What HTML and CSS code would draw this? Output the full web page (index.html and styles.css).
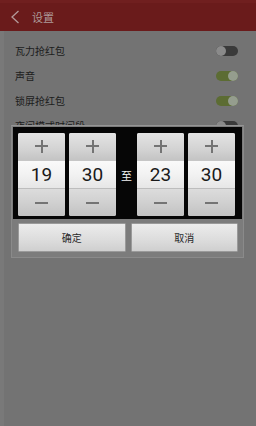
FILE: index.html
```html
<!DOCTYPE html>
<html>
<head>
<meta charset="utf-8">
<link rel="stylesheet" href="styles.css">
</head>
<body>
<div class="screen">
  <header class="topbar">
    <svg class="back" width="10" height="14" viewBox="0 0 10 14"><path d="M8.5 1 L2 7 L8.5 13" fill="none" stroke="#b39a9a" stroke-width="1.3"/></svg>
    <span class="title">设置</span>
  </header>
  <div class="list">
    <div class="row"><span>瓦力抢红包</span><span class="toggle off"></span></div>
    <div class="row"><span>声音</span><span class="toggle on"></span></div>
    <div class="row"><span>锁屏抢红包</span><span class="toggle on"></span></div>
    <div class="row"><span>夜间模式时间段</span><span class="toggle off"></span></div>
  </div>

  <div class="dialog">
    <div class="picker">
      <div class="col"><div class="btn plus"><i class="h"></i><i class="v"></i></div><div class="num">19</div><div class="btn minus"><i class="h"></i></div></div>
      <div class="col"><div class="btn plus"><i class="h"></i><i class="v"></i></div><div class="num">30</div><div class="btn minus"><i class="h"></i></div></div>
      <div class="sep">至</div>
      <div class="col"><div class="btn plus"><i class="h"></i><i class="v"></i></div><div class="num">23</div><div class="btn minus"><i class="h"></i></div></div>
      <div class="col"><div class="btn plus"><i class="h"></i><i class="v"></i></div><div class="num">30</div><div class="btn minus"><i class="h"></i></div></div>
    </div>
    <div class="actions">
      <div class="action">确定</div>
      <div class="action">取消</div>
    </div>
  </div>
</div>
</body>
</html>
```
FILE: styles.css
```css
* { box-sizing: border-box; }
html, body { margin: 0; padding: 0; }
body {
  width: 256px;
  height: 426px;
  background: #737373;
  font-family: "Noto Sans CJK SC", "Noto Sans", sans-serif;
  overflow: hidden;
}
.screen {
  position: relative;
  width: 256px;
  height: 426px;
  background: #737373;
  box-shadow: inset 4px 0 0 #797979;
}
.topbar {
  height: 31px;
  background: #6a1b1b;
  display: flex;
  align-items: center;
  padding-left: 10px;
  border-top: 3px solid #701f1f;
}
.back { display: block; margin-top: -1px; }
.title {
  margin-left: 12px;
  font-size: 11px;
  color: #ad9a9a;
  line-height: 1;
}
.list {
  padding-top: 7px;
}
.row {
  height: 25px;
  display: flex;
  align-items: center;
  justify-content: space-between;
  padding: 0 18px 0 15px;
  font-size: 10px;
  color: #1c1c1c;
}
.toggle {
  width: 22px;
  height: 10px;
  border-radius: 5px;
  position: relative;
}
.toggle::after {
  content: "";
  position: absolute;
  top: 0;
  width: 10px;
  height: 10px;
  border-radius: 50%;
}
.toggle.off { background: #3a3a3a; }
.toggle.off::after { left: 0; background: #8a8a8a; }
.toggle.on { background: #5c6c33; }
.toggle.on::after { right: 0; background: #959d8e; }

.dialog {
  position: absolute;
  left: 11px;
  top: 125px;
  width: 233px;
  height: 133px;
  background: #7c7c7c;
  border: 1px solid #8a8a8a;
  border-top-color: #959595;
  display: flex;
  flex-direction: column;
}
.picker {
  background: #060606;
  margin: 1px 1px 0 1px;
  padding: 6px 4px 3px 5px;
  display: flex;
  align-items: stretch;
}
.col {
  width: 47px;
  height: 83px;
  display: flex;
  flex-direction: column;
  border-radius: 2px;
  overflow: hidden;
  background: #ddd;
}
.col + .col { margin-left: 4px; }
.sep {
  width: 21px;
  display: flex;
  align-items: center;
  justify-content: center;
  color: #f2f2f2;
  font-size: 11px;
}
.btn {
  height: 27px;
  position: relative;
  background: linear-gradient(#e4e4e4, #d3d3d3 60%, #c4c4c4);
}
.btn.minus {
  height: 28px;
  background: linear-gradient(#dcdcdc, #d0d0d0 50%, #c2c2c2);
  border-top: 1px solid #bdbdbd;
}
.btn i {
  position: absolute;
  background: #747474;
}
.btn .h { left: 17px; top: 12px; width: 13px; height: 2px; }
.btn .v { left: 22.5px; top: 6.5px; width: 2px; height: 13px; }
.btn.minus .h { top: 13px; }
.num {
  height: 28px;
  background: linear-gradient(#fafafa, #f2f2f2 50%, #e6e6e6);
  border-top: 1px solid #c6c6c6;
  display: flex;
  align-items: center;
  justify-content: center;
  font-family: Roboto, "Open Sans", sans-serif;
  font-size: 19px;
  color: #1a1a1a;
}
.actions {
  display: flex;
  gap: 5px;
  padding: 4px 5px 0 6px;
}
.action {
  flex: 1;
  height: 29px;
  display: flex;
  align-items: center;
  justify-content: center;
  font-size: 10px;
  color: #2a2a2a;
  background: linear-gradient(#ececec, #dcdcdc 60%, #cfcfcf);
  border: 1px solid #9a9a9a;
  border-radius: 1px;
}
```
